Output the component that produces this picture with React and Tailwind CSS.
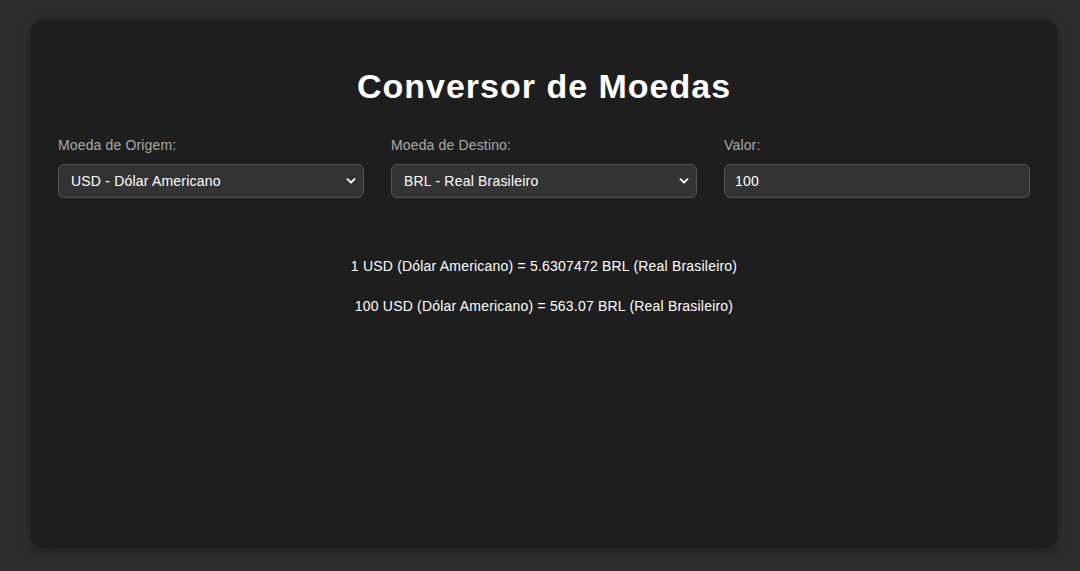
import React, { useState } from "react";

const rates = { USD: { name: "Dólar Americano" }, BRL: { name: "Real Brasileiro" } };

function Chevron() {
  return (
    <svg
      className="pointer-events-none absolute right-[8px] top-1/2 -translate-y-1/2"
      width="10"
      height="10"
      viewBox="0 0 10 10"
    >
      <path d="M1.5 3.2 L5 6.7 L8.5 3.2" fill="none" stroke="#fff" strokeWidth="1.9" strokeLinecap="round" strokeLinejoin="round" />
    </svg>
  );
}

function Field({ label, children }) {
  return (
    <div className="flex flex-col">
      <label className="text-[14px] leading-[16px] text-[#aaaaaa] mb-[11px] tracking-[0.15px]">{label}</label>
      {children}
    </div>
  );
}

export default function App() {
  const [from, setFrom] = useState("USD");
  const [to, setTo] = useState("BRL");
  const [amount, setAmount] = useState("100");

  const ctl =
    "w-full h-[34px] rounded-[6px] border border-[#555555] bg-[#333333] text-white text-[14px] tracking-[0.2px] outline-none";

  return (
    <div
      className="min-h-screen bg-[#2d2d2d] pl-[31px] pr-[23px] pt-[20px] pb-[23px]"
      style={{ fontFamily: "'Liberation Sans', Arial, sans-serif" }}
    >
      <div className="h-[528px] rounded-[12px] bg-[#1e1e1e] shadow-[0_2px_10px_rgba(0,0,0,0.3)] px-[27px] pt-[46px]">
        <h1 className="text-center text-white font-bold text-[34px] leading-[40px] tracking-[1px]">Conversor de Moedas</h1>

        <div className="grid grid-cols-3 gap-[27px] mt-[31px]">
          <Field label="Moeda de Origem:">
            <div className="relative">
              <select value={from} onChange={(e) => setFrom(e.target.value)} className={`${ctl} px-[12px] appearance-none`}>
                <option value="USD">USD - Dólar Americano</option>
                <option value="BRL">BRL - Real Brasileiro</option>
              </select>
              <Chevron />
            </div>
          </Field>
          <Field label="Moeda de Destino:">
            <div className="relative">
              <select value={to} onChange={(e) => setTo(e.target.value)} className={`${ctl} px-[12px] appearance-none`}>
                <option value="BRL">BRL - Real Brasileiro</option>
                <option value="USD">USD - Dólar Americano</option>
              </select>
              <Chevron />
            </div>
          </Field>
          <Field label="Valor:">
            <input value={amount} onChange={(e) => setAmount(e.target.value)} className={`${ctl} px-[10px]`} />
          </Field>
        </div>

        <div className="mt-[60px] flex flex-col items-center gap-[24px] text-white text-[14px] leading-[16px] tracking-[0.2px]">
          <p>1 USD ({rates.USD.name}) = 5.6307472 BRL ({rates.BRL.name})</p>
          <p>100 USD ({rates.USD.name}) = 563.07 BRL ({rates.BRL.name})</p>
        </div>
      </div>
    </div>
  );
}
